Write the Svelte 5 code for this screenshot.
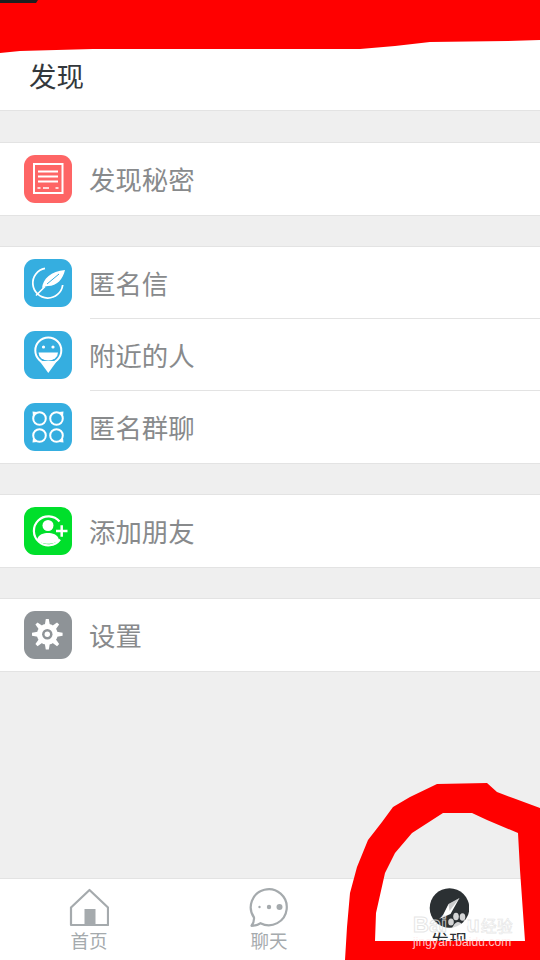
<script>
  const groups = [
    [{ label: '发现秘密', color: '#fe6565', icon: 'secret' }],
    [
      { label: '匿名信', color: '#35aee0', icon: 'letter' },
      { label: '附近的人', color: '#35aee0', icon: 'nearby' },
      { label: '匿名群聊', color: '#35aee0', icon: 'group' }
    ],
    [{ label: '添加朋友', color: '#00df2b', icon: 'add' }],
    [{ label: '设置', color: '#8e9397', icon: 'gear' }]
  ];
  const teeth = [0, 45, 90, 135, 180, 225, 270, 315];
</script>

<div class="page">
  <header class="top"><h1>发现</h1></header>

  <main class="groups">
    {#each groups as group}
      <section class="group">
        {#each group as item}
          <div class="row">
            <div class="tile" style:background={item.color}>
              <svg viewBox="0 0 48 48" width="48" height="48" fill="none" stroke="#fff" stroke-width="2">
                {#if item.icon === 'secret'}
                  <rect x="10" y="9" width="28.5" height="29" />
                  <path d="M14 16.5h20M14 21.5h20M14 26.5h20" />
                  <path d="M13.5 33h3M19 33h6M31.500 33h3" stroke-width="1.500" />
                {:else if item.icon === 'letter'}
                  <path d="M21 9.300A15 15 0 1 0 38.700 26" stroke-width="1.800" />
                  <path d="M18 29 C19 20 27 12 41 11 C39 20 33 27 24 27 L21 27.500 Z" fill="#fff" stroke="none" />
                  <path d="M23 25 L35 15" stroke="#35aee0" stroke-width="1" />
                  <path d="M12 36.500 L21 27.500" stroke-width="1.600" />
                {:else if item.icon === 'nearby'}
                  <circle cx="24.300" cy="19.500" r="13" stroke-width="2" />
                  <path d="M15.500 30 H33 L24.300 42 Z" fill="#fff" stroke="none" />
                  <circle cx="19.500" cy="16" r="1.600" fill="#fff" stroke="none" />
                  <circle cx="29" cy="16" r="1.600" fill="#fff" stroke="none" />
                  <path d="M14.500 21.500 H34 A9.750 8 0 0 1 14.500 21.500Z" fill="#fff" stroke="none" />
                {:else if item.icon === 'group'}
                  <circle cx="15.500" cy="15.500" r="6.300" />
                  <circle cx="32.500" cy="15.500" r="6.300" />
                  <circle cx="15.500" cy="32.500" r="6.300" />
                  <circle cx="32.500" cy="32.500" r="6.300" />
                  <g fill="#fff" stroke="none">
                    <path d="M8.500 8.500 L13 9 L9 13Z" />
                    <path d="M39.500 8.500 L35 9 L39 13Z" />
                    <path d="M8.500 39.500 L9 35 L13 39Z" />
                    <path d="M39.500 39.500 L39 35 L35 39Z" />
                  </g>
                {:else if item.icon === 'add'}
                  <path d="M35.500 14.500A14.500 14.500 0 1 0 36 32.500" stroke-width="2.200" />
                  <circle cx="24" cy="18.500" r="5.500" fill="#fff" stroke="none" />
                  <path d="M13 33 C14 27 20 26 24 26 C28 26 34 27 35 33 C31 38 17 38 13 33Z" fill="#fff" stroke="none" />
                  <path d="M32 24h11.500M37.700 18.200v11.500" stroke-width="2.500" />
                {:else}
                  <g fill="#fff" stroke="none">
                    {#each teeth as a}
                      <path d="M21.800 8 H24.800 L26 15 H20.600Z" transform="rotate({a} 23.300 23.300)" />
                    {/each}
                    <circle cx="23.300" cy="23.300" r="10.500" />
                  </g>
                  <circle cx="23.300" cy="23.300" r="5.200" fill="#8e9397" stroke="none" />
                  <circle cx="23.300" cy="23.300" r="2.700" fill="#fff" stroke="none" />
                {/if}
              </svg>
            </div>
            <span class="label">{item.label}</span>
          </div>
        {/each}
      </section>
    {/each}
  </main>

  <nav class="tabs">
    <div class="tab">
      <svg viewBox="-0.500 0 40 40" width="40" height="40" fill="none" stroke="#a5aaad" stroke-width="2.200">
        <path d="M1.500 37V19.500L20 2 38.500 19.500V37Z" stroke-linejoin="round" />
        <rect x="15" y="21" width="11" height="16" fill="#a5aaad" stroke="none" />
      </svg>
      <span>首页</span>
    </div>
    <div class="tab">
      <svg viewBox="-0.500 0 40 40" width="40" height="40" fill="none" stroke="#a5aaad" stroke-width="2.200">
        <path d="M4.500 29.500A18 18 0 1 1 11 35.200C8 37 5 37.800 2 37.800 3.800 35.500 4.800 33 4.500 29.500Z" stroke-linejoin="round" />
        <g fill="#a5aaad" stroke="none">
          <circle cx="10" cy="19" r="1.200" />
          <circle cx="19.500" cy="19" r="2.200" />
          <circle cx="30" cy="19" r="3" />
        </g>
      </svg>
      <span>聊天</span>
    </div>
    <div class="tab active">
      <svg viewBox="-0.500 0 40 40" width="40" height="40">
        <circle cx="20" cy="20" r="19.800" fill="#2b3033" />
        <path d="M30 10 L19 16 L13 28 L9.500 31 L21 26 Z" fill="#fff" />
        <path d="M30 10 L19 16 L20 23Z" fill="#2b3033" opacity=".25" />
      </svg>
      <span>发现</span>
    </div>
  </nav>

  <div class="watermark" aria-hidden="true">
    <div class="wm-main">Bai<svg class="paw" viewBox="0 0 24 24" width="24" height="24" fill="#fff"><ellipse cx="6" cy="11" rx="2.800" ry="3.500" /><ellipse cx="11" cy="5.500" rx="2.800" ry="3.800" /><ellipse cx="17.500" cy="6" rx="2.800" ry="3.800" /><ellipse cx="21" cy="12" rx="2.500" ry="3.300" /><path d="M13 11c3 0 7 5 7 8s-3 3.500-6 3-6 1-7-2 3-9 6-9Z" /></svg>u<span class="wm-cn">经验</span></div>
    <div class="wm-url">jingyan.baidu.com</div>
  </div>

  <svg class="scribble" viewBox="0 0 540 960" width="540" height="960">
    <path d="M0 0H540V40L508 41 430 42 395 46 360 49H93L20 51 0 53Z" fill="#f00" />
    <path d="M0 0H38L36 3H0Z" fill="#1d1f20" />
    <path fill="#f00" fill-rule="evenodd" d="M345 960L347 927 350 893 357 867 368 840 382 822 393 807 410 797 437 784 487 783 497 792 513 798 540 808V960ZM375 941H525L520 870 518 833 487 820 472 813H443L412 833 395 853 385 873 376 913Z" />
  </svg>
</div>

<style>
  :global(body) { margin: 0; }
  .page {
    position: relative;
    width: 540px;
    height: 960px;
    overflow: hidden;
    display: flex;
    flex-direction: column;
    background: #efefef;
    font-family: "Noto Sans CJK SC", "Noto Sans", sans-serif;
  }
  .top {
    height: 110px;
    box-sizing: content-box;
    background: #fff;
    border-bottom: 1px solid #e3e3e3;
    display: flex;
    align-items: flex-end;
    padding-left: 29px;
  }
  h1 {
    margin: 0 0 16px;
    font-size: 27.500px;
    line-height: 38px;
    font-weight: 400;
    color: #33383c;
  }
  .groups {
    flex: 1;
    padding-top: 31px;
    display: flex;
    flex-direction: column;
    gap: 30px;
  }
  .group {
    background: #fff;
    border-top: 1px solid #e3e3e3;
    border-bottom: 1px solid #e3e3e3;
  }
  .row {
    height: 72px;
    display: flex;
    align-items: center;
    padding-left: 24px;
    position: relative;
  }
  .row + .row::before {
    content: "";
    position: absolute;
    left: 90px;
    right: 0;
    top: -1px;
    height: 1px;
    background: #e3e3e3;
  }
  .tile {
    width: 48px;
    height: 48px;
    border-radius: 11px;
    flex: none;
  }
  .tile svg { display: block; }
  .label {
    margin-left: 17px;
    padding-bottom: 2px;
    font-size: 26.400px;
    color: #888a8c;
  }
  .tabs {
    height: 82px;
    box-sizing: border-box;
    background: #fff;
    border-top: 1px solid #e3e3e3;
    display: grid;
    grid-template-columns: repeat(3, 178px);
    column-gap: 2px;
    padding-top: 9px;
  }
  .tab {
    display: flex;
    flex-direction: column;
    align-items: center;
    font-size: 18.500px;
    line-height: 24px;
    color: #a5aaad;
  }
  .tab svg { display: block; }
  .tab.active { color: #2b3033; }
  .watermark {
    position: absolute;
    left: 413px;
    top: 912px;
    width: 104px;
    color: rgba(255, 255, 255, 0.78);
    font-family: "Liberation Sans", "Noto Sans CJK SC", sans-serif;
    pointer-events: none;
    z-index: 2;
  }
  .wm-main {
    display: flex;
    align-items: center;
    height: 26px;
    white-space: nowrap;
    font-size: 22px;
    font-weight: 700;
    line-height: 26px;
    color: transparent;
    -webkit-text-stroke: 1px rgba(225, 225, 225, 0.85);
  }
  .paw { margin: -4px -3px 0 -2px; opacity: .8; flex: none; }
  .wm-cn {
    flex: none;
    font-size: 16px;
    font-weight: 400;
    margin-left: 1px;
    font-family: "Noto Sans CJK SC", sans-serif;
    -webkit-text-stroke: 0.6px rgba(225, 225, 225, 0.85);
  }
  .wm-url {
    font-size: 12px;
    line-height: 14px;
    margin-top: -3px;
    letter-spacing: .1px;
    color: rgba(255, 235, 235, 0.85);
  }
  .scribble {
    position: absolute;
    left: 0;
    top: 0;
    pointer-events: none;
    z-index: 1;
  }
</style>
